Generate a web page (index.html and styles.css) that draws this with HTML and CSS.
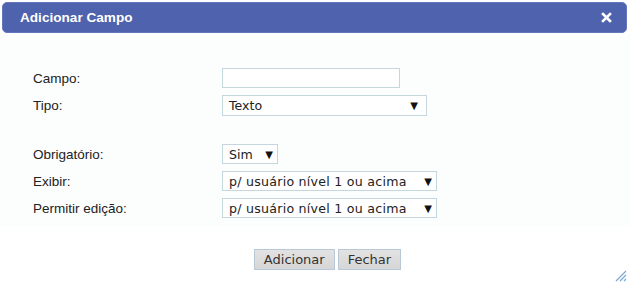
FILE: index.html
```html
<!DOCTYPE html>
<html lang="pt">
<head>
<meta charset="utf-8">
<title>Adicionar Campo</title>
<link rel="stylesheet" href="styles.css">
</head>
<body>
<div class="dialog">
  <div class="titlebar">
    <span class="title">Adicionar Campo</span>
    <span class="close" aria-label="Fechar">
      <svg width="11" height="11" viewBox="0 0 11 11"><path d="M2 2 L9 9 M9 2 L2 9" stroke="#fff" stroke-width="2.6" stroke-linecap="square"/></svg>
    </span>
  </div>
  <div class="content">
    <div class="form">
      <label class="lbl">Campo:</label>
      <div class="input w-campo"></div>
      <label class="lbl">Tipo:</label>
      <div class="select w-tipo"><span>Texto</span><span class="arrow">▼</span></div>
      <div class="spacer"></div>
      <label class="lbl">Obrigatório:</label>
      <div class="select w-sim"><span>Sim</span><span class="arrow">▼</span></div>
      <label class="lbl">Exibir:</label>
      <div class="select w-nivel"><span>p/ usuário nível 1 ou acima</span><span class="arrow">▼</span></div>
      <label class="lbl">Permitir edição:</label>
      <div class="select w-nivel"><span>p/ usuário nível 1 ou acima</span><span class="arrow">▼</span></div>
    </div>
  </div>
  <div class="buttonpane">
    <button class="btn">Adicionar</button>
    <button class="btn">Fechar</button>
    <svg class="resize" width="12" height="12" viewBox="0 0 12 12"><path d="M11 1 L1 11 M11 5 L5 11 M11 9 L9 11" stroke="#7aa6d6" stroke-width="1.2"/></svg>
  </div>
</div>
</body>
</html>
```
FILE: styles.css
```css
html, body {
  margin: 0;
  padding: 0;
  background: #ffffff;
}
.dialog {
  position: relative;
  width: 631px;
  height: 282px;
  font-family: "Liberation Sans", Arial, sans-serif;
  color: #222;
}
.titlebar {
  margin: 2px 4px 0 2px;
  height: 29px;
  background: #4e62ad;
  border: 1px solid #6477bd;
  border-radius: 5px;
  display: flex;
  align-items: center;
  justify-content: space-between;
  padding: 0 14px 0 17px;
}
.title {
  color: #fff;
  font-weight: bold;
  font-size: 13.6px;
}
.close {
  display: flex;
}
.content {
  background: #fcfdfd;
  padding: 35px 0 9px 33px;
}
.form {
  display: grid;
  grid-template-columns: 189px auto;
  grid-template-rows: 20px 20px 15px 20px 20px 20px;
  row-gap: 7px;
  align-items: center;
}
.spacer {
  grid-column: 1 / 3;
  height: 15px;
}
.lbl {
  font-size: 13.5px;
  color: #222;
}
.input, .select {
  box-sizing: border-box;
  height: 20px;
  border: 1px solid #c4d6de;
  background: #fff;
  font-family: "DejaVu Sans", Verdana, sans-serif;
  font-size: 12.6px;
  color: #222;
  display: flex;
  align-items: center;
  justify-content: space-between;
  padding: 0 4px 0 6px;
  justify-self: start;
}
.arrow {
  font-size: 10px;
  color: #111;
}
.w-campo { width: 178px; }
.w-tipo { width: 205px; height: 21px; padding-right: 8px; }
.w-sim { width: 56px; }
.w-nivel { width: 215px; }
.w-nivel span:first-child { letter-spacing: 0.25px; }
.buttonpane {
  display: flex;
  justify-content: center;
  gap: 3px;
  padding: 22px 0 0 24px;
}
.btn {
  height: 21px;
  border: 1px solid #b9c8d6;
  background: linear-gradient(#e2e2e2, #d6d6d6);
  font-family: "DejaVu Sans", Verdana, sans-serif;
  font-size: 13px;
  color: #333;
  padding: 0 9px;
  margin: 0;
}
.resize {
  position: absolute;
  right: 4px;
  bottom: 2px;
}
```
